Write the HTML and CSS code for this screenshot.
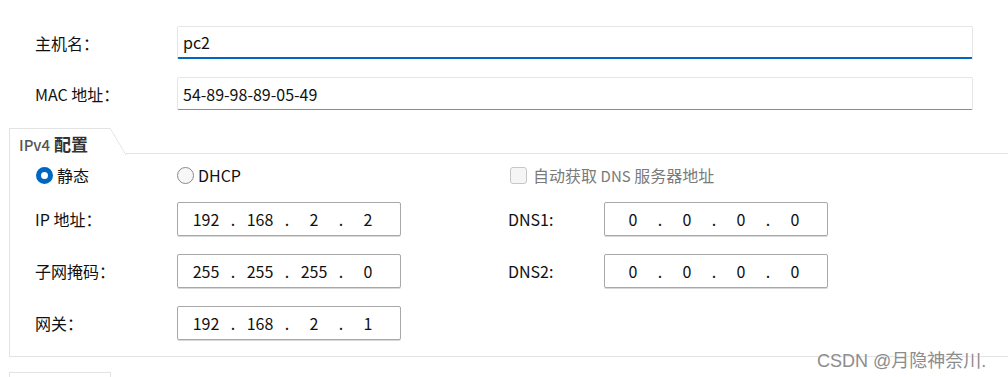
FILE: index.html
```html
<!DOCTYPE html>
<html lang="zh-CN">
<head>
  <meta charset="utf-8">
  <meta name="viewport" content="width=device-width, initial-scale=1.0">
  <title>PC 配置</title>
  <link rel="stylesheet" href="styles.css">
</head>
<body>

  <div class="host-form">
    <label class="label">主机名：</label>
    <div class="field focused">pc2</div>

    <label class="label">MAC 地址：</label>
    <div class="field">54-89-98-89-05-49</div>
  </div>

  <div class="tab-row">
    <div class="tab"><span class="tab-latin">IPv4</span> 配置</div>
    <div class="tab-filler"></div>
  </div>

  <div class="panel">
    <div class="radio checked"><span class="dot-mark"></span>静态</div>
    <div class="radio"><span class="dot-mark"></span>DHCP</div>
    <div class="check disabled"><span class="box-mark"></span><span>自动获取 <span class="small-latin">DNS</span> 服务器地址</span></div>

    <div class="label">IP 地址：</div>
    <div class="ip-box">
      <span class="oct">192</span><span class="sep">.</span><span class="oct">168</span><span class="sep">.</span><span class="oct">2</span><span class="sep">.</span><span class="oct">2</span>
    </div>
    <div class="label dns-label">DNS1:</div>
    <div class="ip-box">
      <span class="oct">0</span><span class="sep">.</span><span class="oct">0</span><span class="sep">.</span><span class="oct">0</span><span class="sep">.</span><span class="oct">0</span>
    </div>

    <div class="label">子网掩码：</div>
    <div class="ip-box">
      <span class="oct">255</span><span class="sep">.</span><span class="oct">255</span><span class="sep">.</span><span class="oct">255</span><span class="sep">.</span><span class="oct">0</span>
    </div>
    <div class="label dns-label">DNS2:</div>
    <div class="ip-box">
      <span class="oct">0</span><span class="sep">.</span><span class="oct">0</span><span class="sep">.</span><span class="oct">0</span><span class="sep">.</span><span class="oct">0</span>
    </div>

    <div class="label">网关：</div>
    <div class="ip-box">
      <span class="oct">192</span><span class="sep">.</span><span class="oct">168</span><span class="sep">.</span><span class="oct">2</span><span class="sep">.</span><span class="oct">1</span>
    </div>
  </div>

  <div class="next-tab"></div>

  <div class="watermark">CSDN @月隐神奈川.</div>
</body>
</html>
```

FILE: styles.css
```css
body {
  font-family: "Noto Sans CJK SC", "DejaVu Sans", sans-serif;
  font-size: 16px;
  margin: 0;
  padding: 0;
  background-color: #FFFFFF;
  color: #111111;
  position: relative;
  height: 377px;
  overflow: hidden;
}

.host-form {
  display: grid;
  grid-template-columns: 142px 796px;
  grid-auto-rows: 33px;
  row-gap: 18px;
  padding: 26px 0 0 35px;
}

.label {
  display: flex;
  align-items: center;
  color: #111111;
  white-space: nowrap;
}

.field {
  box-sizing: border-box;
  display: flex;
  align-items: center;
  padding-left: 5px;
  border: 1px solid #E6E6E6;
  border-bottom: 1px solid #8C8C8C;
  border-radius: 2px;
}

.field.focused {
  border-bottom: 2px solid #0067C0;
}

.tab-row {
  display: flex;
  height: 26px;
  margin-top: 18px;
  margin-left: 9px;
}

.tab {
  position: relative;
  box-sizing: border-box;
  width: 101px;
  height: 26px;
  margin-right: 16px;
  padding: 0 0 0 9px;
  border-top: 1px solid #E3E3E3;
  border-left: 1px solid #E3E3E3;
  font-size: 17px;
  line-height: 30px;
  font-weight: bold;
  color: #333333;
}

.tab-latin {
  font-size: 15px;
  font-weight: 500;
  color: #555555;
}

.tab::after {
  content: "";
  position: absolute;
  top: -1px;
  right: -16px;
  width: 16px;
  height: 27px;
  background: linear-gradient(to top right, transparent calc(50% - 0.7px), #E0E0E0, transparent calc(50% + 0.7px));
}

.tab-filler {
  flex: 1;
  border-bottom: 1px solid #E3E3E3;
}

.panel {
  display: grid;
  grid-template-columns: 142px 224px 107px 96px 224px;
  grid-template-rows: 18px 34px 34px 34px;
  row-gap: 18px;
  margin-left: 9px;
  padding: 12px 0 16px 25px;
  border-left: 1px solid #E3E3E3;
  border-bottom: 1px solid #E3E3E3;
}

.radio {
  display: flex;
  align-items: center;
  gap: 4px;
}

.panel .radio:first-child {
  margin-left: 1px;
}

.dot-mark {
  box-sizing: border-box;
  width: 17px;
  height: 17px;
  border-radius: 50%;
  border: 1px solid #8A8A8A;
  background-color: #F7F7F7;
}

.radio.checked .dot-mark {
  border: 5px solid #0067C0;
  background-color: #FFFFFF;
}

.check {
  grid-column: 4 / span 2;
  display: flex;
  align-items: center;
  gap: 6px;
  margin-left: 2px;
  white-space: nowrap;
}

.check.disabled {
  color: #7A7A7A;
}

.small-latin {
  font-size: 15px;
}

.box-mark {
  box-sizing: border-box;
  width: 17px;
  height: 17px;
  border-radius: 3px;
  border: 1px solid #C6C6C6;
  background-color: #F5F5F5;
}

.dns-label {
  grid-column: 4;
}

.ip-box {
  box-sizing: border-box;
  display: flex;
  align-items: center;
  padding-left: 4px;
  border: 1px solid #A8A8A8;
  border-radius: 2px;
  box-shadow: 0 1px 0 #D8D8D8;
}

.oct {
  width: 48px;
  text-align: center;
}

.sep {
  width: 6px;
  text-align: center;
}

.next-tab {
  width: 100px;
  height: 10px;
  margin: 15px 0 0 9px;
  border: 1px solid #E3E3E3;
  border-bottom: none;
}

.watermark {
  position: absolute;
  left: 817px;
  top: 346px;
  font-family: "Liberation Sans", "Noto Sans CJK SC", sans-serif;
  font-size: 18px;
  color: #8C8C8C;
  text-shadow: 0 0 2px #FFFFFF, 0 0 1px #FFFFFF;
}
```
